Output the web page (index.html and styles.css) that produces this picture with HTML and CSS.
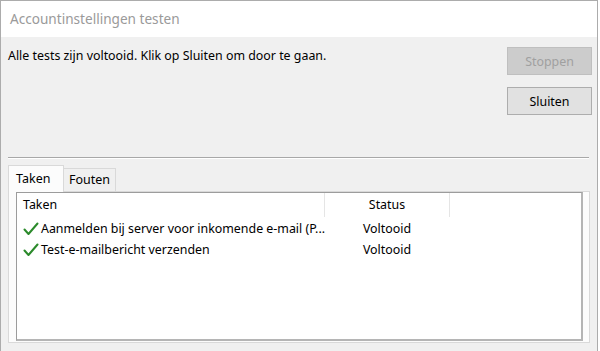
FILE: index.html
```html
<!DOCTYPE html>
<html lang="nl">
<head>
<meta charset="utf-8">
<title>Accountinstellingen testen</title>
<link rel="stylesheet" href="styles.css">
</head>
<body>
<div class="window">
  <div class="titlebar">Accountinstellingen testen</div>
  <div class="content">
    <div class="top-row">
      <div class="message">Alle tests zijn voltooid. Klik op Sluiten om door te gaan.</div>
      <div class="buttons">
        <button class="btn btn-disabled" disabled>Stoppen</button>
        <button class="btn">Sluiten</button>
      </div>
    </div>
    <div class="separator"></div>
    <div class="tabs">
      <div class="tab tab-active">Taken</div>
      <div class="tab">Fouten</div>
    </div>
    <div class="tab-panel">
      <div class="listview">
        <div class="lv-row lv-header">
          <div class="col col-task">Taken</div>
          <div class="col col-status">Status</div>
          <div class="col col-rest"></div>
        </div>
        <div class="lv-row">
          <div class="col col-task">
            <svg class="check" width="16" height="16" viewBox="0 0 16 16"><path d="M1.5 8.5 L5.5 13 L14.5 2.5" fill="none" stroke="#2b8a2b" stroke-width="2" stroke-linecap="round" stroke-linejoin="round"/></svg>
            <span>Aanmelden bij server voor inkomende e-mail (P...</span>
          </div>
          <div class="col col-status">Voltooid</div>
        </div>
        <div class="lv-row">
          <div class="col col-task">
            <svg class="check" width="16" height="16" viewBox="0 0 16 16"><path d="M1.5 8.5 L5.5 13 L14.5 2.5" fill="none" stroke="#2b8a2b" stroke-width="2" stroke-linecap="round" stroke-linejoin="round"/></svg>
            <span>Test-e-mailbericht verzenden</span>
          </div>
          <div class="col col-status">Voltooid</div>
        </div>
      </div>
    </div>
  </div>
</div>
</body>
</html>
```
FILE: styles.css
```css
html, body {
  margin: 0;
  padding: 0;
  background: #ffffff;
}
body {
  font-family: "Noto Sans", "Open Sans", sans-serif;
  font-size: 12.4px;
  color: #000;
}
.window {
  width: 598px;
  height: 351px;
  box-sizing: border-box;
  border: 1px solid #acacac;
  border-bottom: none;
  display: flex;
  flex-direction: column;
  overflow: hidden;
}
.titlebar {
  height: 36px;
  background: #ffffff;
  color: #9a9a9a;
  font-size: 13.6px;
  line-height: 36px;
  padding-left: 9px;
  flex: none;
}
.content {
  flex: 1;
  background: #f0f0f0;
  display: flex;
  flex-direction: column;
  padding: 0 7px 0 7px;
}
.top-row {
  display: flex;
  justify-content: space-between;
  padding-top: 10px;
}
.message {
  line-height: 17px;
}
.buttons {
  display: flex;
  flex-direction: column;
  gap: 12px;
  margin-right: -2px;
}
.btn {
  width: 85px;
  height: 28px;
  box-sizing: border-box;
  font-family: inherit;
  font-size: 12.4px;
  background: #e1e1e1;
  border: 1px solid #adadad;
  color: #000;
  padding: 0;
}
.btn-disabled {
  background: #cccccc;
  border-color: #bfbfbf;
  color: #a0a0a0;
}
.separator {
  margin-top: 42px;
  height: 1px;
  background: #a8a8a8;
  border-bottom: 1px solid #ffffff;
  margin-right: 1px;
}
.tabs {
  display: flex;
  align-items: flex-end;
  margin-top: 6px;
  height: 26px;
}
.tab {
  height: 23px;
  box-sizing: border-box;
  padding: 0 5px;
  border: 1px solid #d9d9d9;
  border-bottom: none;
  border-left: none;
  background: #f0f0f0;
  line-height: 22px;
  font-size: 12.5px;
}
.tab-active {
  height: 27px;
  width: 56px;
  padding-left: 7px;
  border-left: 1px solid #d9d9d9;
  background: #fcfcfc;
  line-height: 26px;
  margin-bottom: -1px;
  position: relative;
  z-index: 1;
}
.tab-panel {
  height: 152px;
  box-sizing: border-box;
  border: 1px solid #d9d9d9;
  background: #fcfcfc;
  margin-right: 0;
  padding: 0 6px 1px 7px;
}
.listview {
  height: 149px;
  box-sizing: border-box;
  background: #ffffff;
  border: 1px solid #9c9c9c;
  border-right-width: 2px;
  border-bottom-width: 2px;
  border-right-color: #b5b5b5;
  border-bottom-color: #b5b5b5;
}
.lv-row {
  display: flex;
  height: 21px;
  line-height: 21px;
}
.lv-header {
  height: 24px;
  line-height: 24px;
  margin-bottom: 1px;
}
.col {
  white-space: nowrap;
  overflow: hidden;
}
.col-task {
  width: 308px;
  padding-left: 6px;
  box-sizing: border-box;
  display: flex;
  align-items: center;
}
.col-status {
  width: 124px;
  text-align: center;
}
.lv-header .col-task,
.lv-header .col-status {
  border-right: 1px solid #e5e5e5;
}
.check {
  flex: none;
  margin-right: 2px;
}
```
